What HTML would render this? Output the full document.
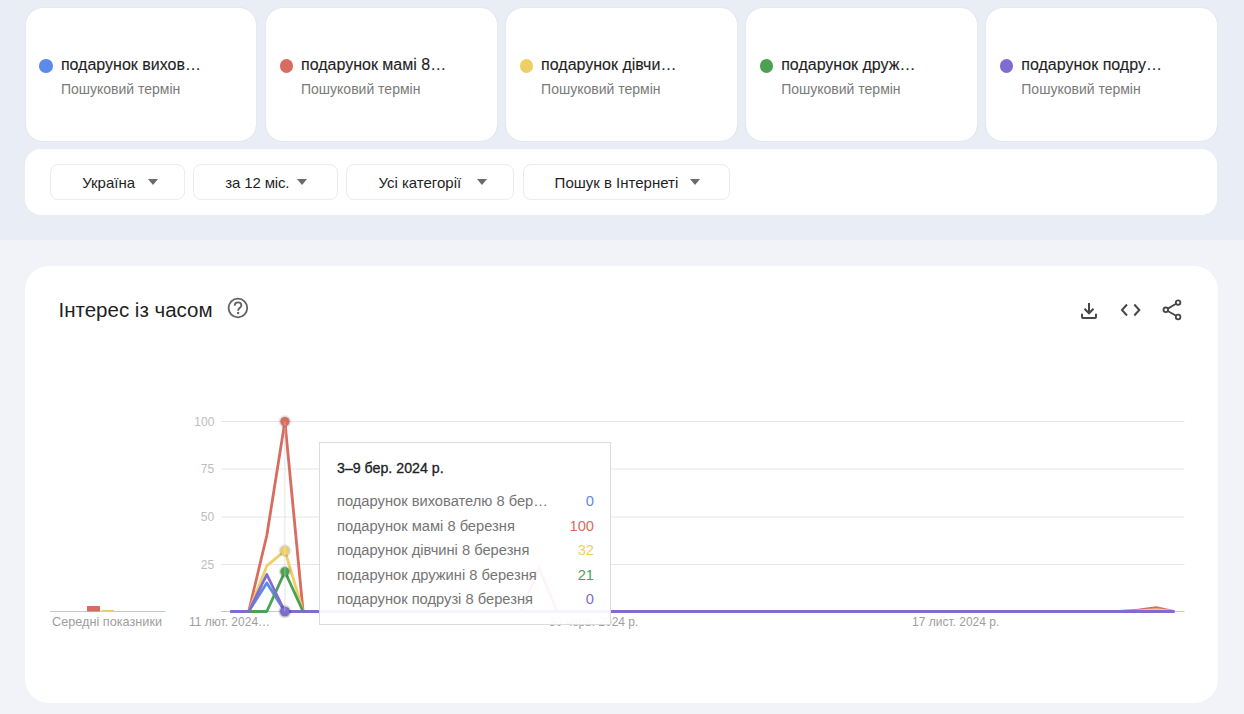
<!DOCTYPE html>
<html><head><meta charset="utf-8">
<style>
*{margin:0;padding:0;box-sizing:border-box}
html,body{width:1244px;height:714px;overflow:hidden;font-family:"Liberation Sans",sans-serif;background:#f1f3f8}
.top{position:absolute;left:0;top:0;width:1244px;height:240px;background:#e9eef6}
.card{position:absolute;top:8px;width:230.5px;height:133px;background:#fff;border-radius:16px;box-shadow:0 0 1px rgba(60,64,80,.25)}
.dot{position:absolute;left:13.5px;top:51px;width:13.5px;height:13.5px;border-radius:50%}
.ttl{position:absolute;left:35px;top:48.2px;font-size:16px;color:#1f1f1f;white-space:nowrap;-webkit-text-stroke:0.12px #1f1f1f}
.sub{position:absolute;left:35px;top:73.4px;font-size:14px;color:#7a7a7a;white-space:nowrap}
.bar{position:absolute;left:25px;top:149px;width:1192.4px;height:66px;background:#fff;border-radius:16px}
.btn{position:absolute;top:164px;height:36px;border:1px solid #ececec;border-radius:8px;background:#fff}
.btn span{position:absolute;top:9px;font-size:15px;color:#1f1f1f;white-space:nowrap}
.btn i{position:absolute;top:14px;width:0;height:0;border-left:5px solid transparent;border-right:5px solid transparent;border-top:6px solid #6a6a6a}
.main{position:absolute;left:25px;top:266px;width:1192.5px;height:437px;background:#fff;border-radius:24px}
.h{position:absolute;left:58.5px;top:298px;font-size:20.5px;color:#1f1f1f;white-space:nowrap}
.ax{position:absolute;font-size:12px;color:#bdbdbd;white-space:nowrap}
.xl{position:absolute;font-size:12px;color:#9e9e9e;white-space:nowrap;top:615px}
.tip{position:absolute;left:319px;top:442px;width:292px;height:183px;background:rgba(255,255,255,0.93);border:1px solid #dcdcdc}
.tip b{position:absolute;left:17px;top:16.7px;font-size:14.2px;font-weight:normal;color:#202124;-webkit-text-stroke:0.3px #202124;white-space:nowrap}
.row{position:absolute;left:17px;font-size:14.7px;color:#757575;white-space:nowrap}
.val{position:absolute;right:16px;font-size:14.7px;white-space:nowrap}
</style></head><body>
<div class="top"></div>

<div class="card" style="left:25.9px"><div class="dot" style="background:#5a8aea"></div><div class="ttl">подарунок вихов…</div><div class="sub">Пошуковий термін</div></div>
<div class="card" style="left:266px"><div class="dot" style="background:#d86c60"></div><div class="ttl">подарунок мамі 8…</div><div class="sub">Пошуковий термін</div></div>
<div class="card" style="left:506.1px"><div class="dot" style="background:#eecf66"></div><div class="ttl">подарунок дівчи…</div><div class="sub">Пошуковий термін</div></div>
<div class="card" style="left:746.2px"><div class="dot" style="background:#4da153"></div><div class="ttl">подарунок друж…</div><div class="sub">Пошуковий термін</div></div>
<div class="card" style="left:986.3px"><div class="dot" style="background:#806bd0"></div><div class="ttl">подарунок подру…</div><div class="sub">Пошуковий термін</div></div>

<div class="bar"></div>
<div class="btn" style="left:50.2px;width:134.4px"><span style="left:31px">Україна</span><i style="left:97px"></i></div>
<div class="btn" style="left:193.3px;width:144.8px"><span style="left:31px;letter-spacing:-0.15px">за 12 міс.</span><i style="left:103px"></i></div>
<div class="btn" style="left:346.4px;width:167.6px"><span style="left:31px">Усі категорії</span><i style="left:130px"></i></div>
<div class="btn" style="left:522.6px;width:207.6px"><span style="left:31px">Пошук в Інтернеті</span><i style="left:166px"></i></div>

<div class="main"></div>
<div class="h">Інтерес із часом</div>
<svg style="position:absolute;left:226px;top:296px" width="24" height="24" viewBox="0 0 24 24"><circle cx="11.9" cy="12" r="9.3" fill="none" stroke="#616161" stroke-width="1.8"/><path d="M8.7 9.8C8.7 7.7 10.2 6.3 12 6.3C13.9 6.3 15.4 7.6 15.4 9.4C15.4 11.6 12.2 12 12.1 14.7" fill="none" stroke="#616161" stroke-width="1.8"/><circle cx="12.1" cy="17" r="1.2" fill="#616161"/></svg>

<svg style="position:absolute;left:0;top:0" width="1244" height="714">
 <g fill="none" stroke="#e6e6e6" stroke-width="1">
  <line x1="221" y1="421.5" x2="1184.5" y2="421.5"/>
  <line x1="221" y1="469" x2="1184.5" y2="469"/>
  <line x1="221" y1="517" x2="1184.5" y2="517"/>
  <line x1="221" y1="564.5" x2="1184.5" y2="564.5"/>
 </g>
 <line x1="221" y1="611.5" x2="1184.5" y2="611.5" stroke="#c8c8c8" stroke-width="1"/>
 <line x1="50" y1="611.5" x2="165.5" y2="611.5" stroke="#c8c8c8" stroke-width="1"/>
 <rect x="87" y="606" width="13" height="5.5" fill="#d86c60"/>
 <rect x="101.5" y="610" width="12.5" height="1.5" fill="#eecf66"/>
 <line x1="284.9" y1="421.5" x2="284.9" y2="611.5" stroke="#dcdcdc" stroke-width="1"/>
 <g fill="none" stroke-width="2.8" stroke-linejoin="round">
  <polyline stroke="#5a8aea" points="230.5,611.5 248.7,611.5 266.8,583.0 284.9,611.5 1174.3,611.5"/>
  <polyline stroke="#d86c60" points="230.5,611.5 248.7,611.5 266.8,535.5 284.9,421.5 303.1,611.5 520.9,611.5 539.0,567.8 557.2,611.5 1120.0,611.5 1138.0,610.2 1156.2,607.7 1174.3,611.5"/>
  <polyline stroke="#eecf66" points="230.5,611.5 248.7,611.5 266.8,565.9 284.9,550.7 303.1,611.5 1120.0,611.5 1138.0,611.0 1156.2,609.6 1174.3,611.5"/>
  <polyline stroke="#4da153" points="230.5,611.5 266.8,611.5 284.9,571.6 303.1,611.5 1174.3,611.5"/>
  <polyline stroke="#806bd0" points="230.5,611.5 248.7,611.5 266.8,574.5 284.9,611.5 1174.3,611.5"/>
 </g>
 <defs><filter id="sh" x="-50%" y="-50%" width="200%" height="200%"><feGaussianBlur stdDeviation="1"/></filter></defs>
 <g>
  <circle cx="284.9" cy="421.5" r="5.2" fill="#000" opacity=".3" filter="url(#sh)"/>
  <circle cx="284.9" cy="421.5" r="4.5" fill="#d86c60"/>
  <circle cx="284.9" cy="550.7" r="5.2" fill="#000" opacity=".3" filter="url(#sh)"/>
  <circle cx="284.9" cy="550.7" r="4.5" fill="#eecf66"/>
  <circle cx="284.9" cy="571.6" r="5.2" fill="#000" opacity=".3" filter="url(#sh)"/>
  <circle cx="284.9" cy="571.6" r="4.5" fill="#4da153"/>
  <circle cx="284.9" cy="611.5" r="5.2" fill="#000" opacity=".3" filter="url(#sh)"/>
  <circle cx="284.9" cy="611.5" r="4.5" fill="#5a8aea"/>
  <circle cx="284.9" cy="611.5" r="5.2" fill="#000" opacity=".3" filter="url(#sh)"/>
  <circle cx="284.9" cy="611.5" r="4.5" fill="#806bd0"/>
  <line x1="284.9" y1="421.5" x2="284.9" y2="611.5" stroke="#ffffff" stroke-opacity=".35" stroke-width="1"/>
 </g>
</svg>

<div class="ax" style="left:194.3px;top:414.8px">100</div>
<div class="ax" style="left:200.8px;top:462.3px">75</div>
<div class="ax" style="left:200.8px;top:510.3px">50</div>
<div class="ax" style="left:200.8px;top:557.8px">25</div>
<div class="xl" style="left:52px;font-size:12.7px">Середні показники</div>
<div class="xl" style="left:189px">11 лют. 2024…</div>
<div class="xl" style="left:549px">30 черв. 2024 р.</div>
<div class="xl" style="left:912px">17 лист. 2024 р.</div>

<div class="tip">
 <b>3–9 бер. 2024 р.</b>
 <div class="row" style="top:50px">подарунок вихователю 8 бер…</div><div class="val" style="top:50px;color:#5a8aea">0</div>
 <div class="row" style="top:74.5px">подарунок мамі 8 березня</div><div class="val" style="top:74.5px;color:#d86c60">100</div>
 <div class="row" style="top:99px">подарунок дівчині 8 березня</div><div class="val" style="top:99px;color:#eecf66">32</div>
 <div class="row" style="top:123.5px">подарунок дружині 8 березня</div><div class="val" style="top:123.5px;color:#4da153">21</div>
 <div class="row" style="top:148px">подарунок подрузі 8 березня</div><div class="val" style="top:148px;color:#806bd0">0</div>
</div>

<svg style="position:absolute;left:1077px;top:299px" width="24" height="24" viewBox="0 0 24 24" fill="none" stroke="#444746" stroke-width="2">
 <path d="M12 4v10M7.5 9.8 12 14.3l4.5-4.5"/><path d="M5 15.5v2.5a1 1 0 0 0 1 1h12a1 1 0 0 0 1-1v-2.5" stroke-linecap="round"/>
</svg>
<svg style="position:absolute;left:1119px;top:298px" width="24" height="24" viewBox="0 0 24 24" fill="none" stroke="#444746" stroke-width="2">
 <path d="M8 6.5 3 12l5 5.5M15.3 6.5l5 5.5-5 5.5"/>
</svg>
<svg style="position:absolute;left:1160px;top:298px" width="24" height="24" viewBox="0 0 24 24" fill="none" stroke="#444746" stroke-width="1.8">
 <circle cx="18.1" cy="4.6" r="2.3"/><circle cx="5.8" cy="11.8" r="2.3"/><circle cx="18.1" cy="19" r="2.3"/>
 <path d="M7.8 10.6 16.1 5.8M7.8 13 16.1 17.8"/>
</svg>
</body></html>
